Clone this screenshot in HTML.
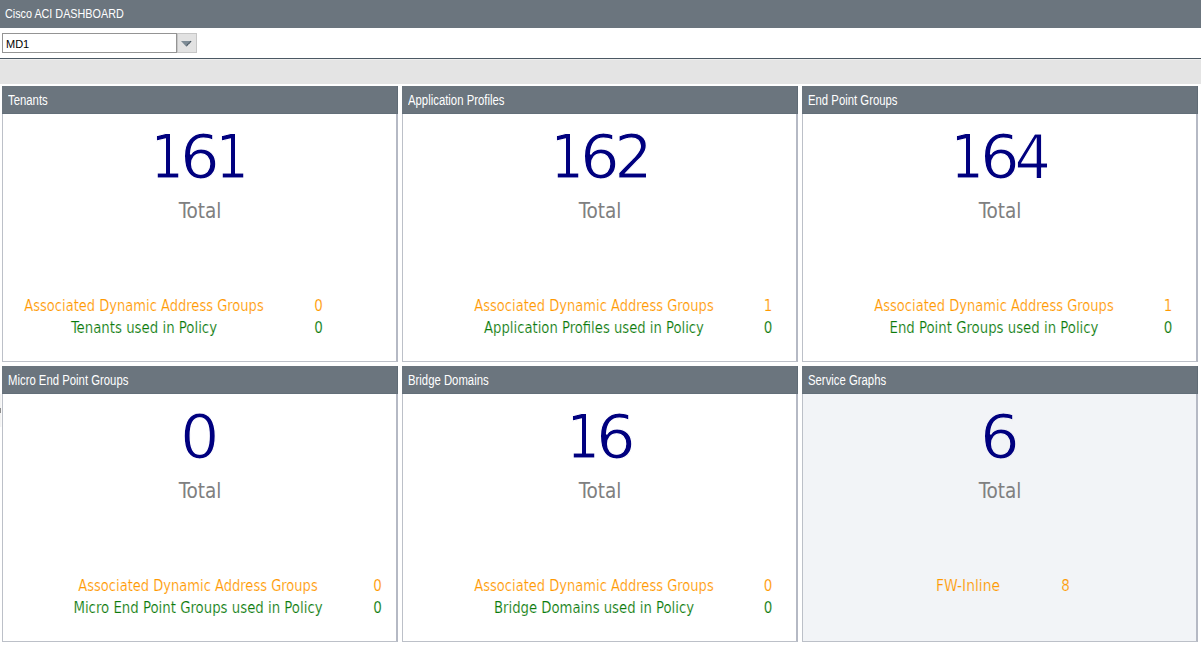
<!DOCTYPE html>
<html>
<head>
<meta charset="utf-8">
<title>Cisco ACI DASHBOARD</title>
<style>
html,body{margin:0;padding:0;background:#fff;}
body{width:1201px;height:645px;position:relative;overflow:hidden;font-family:"DejaVu Sans Condensed","DejaVu Sans","Liberation Sans",sans-serif;}
.narrow{font-family:"Liberation Sans",sans-serif;display:inline-block;transform:scaleX(.82);transform-origin:0 50%;white-space:nowrap;}
#top{position:absolute;left:0;top:0;width:1201px;height:28px;background:#6b757e;color:#fff;font-size:13px;line-height:28px;}
#top span{position:absolute;left:5px;top:0;transform:scaleX(.83);}
#sel{position:absolute;left:2px;top:33px;width:173px;height:18px;border:1px solid #949494;background:#fff;font-family:"Liberation Sans",sans-serif;font-size:11px;line-height:18px;color:#000;}
#sel span{position:absolute;left:3px;top:1px;}
#btn{position:absolute;left:177px;top:33px;width:18px;height:18px;border:1px solid #c6c6c6;background:#e2e2e2;}
#btn svg{position:absolute;left:0;top:0;}
#line{position:absolute;left:0;top:58px;width:1201px;height:1px;background:#4b5863;}
#band{position:absolute;left:0;top:59px;width:1201px;height:25px;background:#e4e4e4;border-top:1px solid #efefef;box-sizing:border-box;}
.p{position:absolute;width:396px;height:276px;background:#fff;}
.p .h{position:absolute;left:0;top:0;width:396px;height:28px;box-sizing:border-box;border-right:1px solid #5f6b75;border-bottom:1px solid #636f79;background:#6b757e;color:#fff;font-size:14px;line-height:28px;}
.p .h span{position:absolute;left:6px;top:0;transform:scaleX(.81);}
.p .b{position:absolute;left:0;top:28px;width:393px;height:247px;border:1px solid #bcc0c8;border-right:2px solid #b5b9c4;border-top:none;background:#fff;}
.p.g .b{background:#f2f4f7;}
.num{position:absolute;left:0;top:36px;width:396px;text-align:center;font-size:61px;line-height:70px;color:#00007f;}
.num span{display:inline-block;margin:0 -1.05px;transform:translateX(var(--x,0px)) scaleX(var(--s,.948));-webkit-text-stroke:1.1px #fff;}
.d1{--s:.94;--x:-.3px}.d6{--s:1.14;--x:-.6px}.d0{--s:1.13;--x:-.7px}.d2{--s:1.1;--x:1px}.d4{--s:1.04;--x:.2px}
.p.g .num span{-webkit-text-stroke-color:#f3f4f7;}
.tot{position:absolute;left:0;top:111px;width:396px;text-align:center;font-size:20.5px;line-height:28px;color:#808080;}
.r{position:absolute;font-size:15px;line-height:22px;white-space:nowrap;transform:translate(-50%,1px) scaleX(var(--s,1));}
.r{-webkit-text-stroke:.15px #fff;}
.p.g .r{-webkit-text-stroke-color:#f2f4f7;}
.o{color:#ff9900;top:208px;}
.gr{color:#0a7a0a;top:230px;}
#tick{position:absolute;left:0;top:394px;width:1px;height:33px;background:#f3f3f3;box-shadow:1px 0 0 #fafafa;}
#tick i{position:absolute;left:0;top:14px;width:1px;height:5px;background:#8e8e8e;}
</style>
</head>
<body>
<div id="top"><span class="narrow">Cisco ACI DASHBOARD</span></div>
<div id="sel"><span>MD1</span></div>
<div id="btn"><svg width="18" height="18" viewBox="0 0 18 18"><polygon points="3,7 13.4,7 8.2,12.6" fill="#7d8b95"/><line x1="13.1" y1="7.2" x2="8.4" y2="12.1" stroke="#3d4b57" stroke-width="1.1" stroke-dasharray="1.6 .5"/></svg></div>
<div id="line"></div>
<div id="band"></div>
<div id="tick"><i></i></div>

<div class="p" style="left:2px;top:86px">
  <div class="h"><span class="narrow">Tenants</span></div>
  <div class="b"></div>
  <div class="num"><span class="d1">1</span><span class="d6">6</span><span class="d1">1</span></div>
  <div class="tot">Total</div>
  <div class="r o" style="left:141.5px;--s:.968">Associated Dynamic Address Groups</div><div class="r o" style="left:316.5px">0</div>
  <div class="r gr" style="left:141.5px;--s:.987">Tenants used in Policy</div><div class="r gr" style="left:316.5px">0</div>
</div>

<div class="p" style="left:402px;top:86px">
  <div class="h"><span class="narrow">Application Profiles</span></div>
  <div class="b"></div>
  <div class="num"><span class="d1">1</span><span class="d6">6</span><span class="d2">2</span></div>
  <div class="tot">Total</div>
  <div class="r o" style="left:191.5px;--s:.968">Associated Dynamic Address Groups</div><div class="r o" style="left:366px">1</div>
  <div class="r gr" style="left:191.5px;--s:.977">Application Profiles used in Policy</div><div class="r gr" style="left:366px">0</div>
</div>

<div class="p" style="left:802px;top:86px">
  <div class="h"><span class="narrow">End Point Groups</span></div>
  <div class="b"></div>
  <div class="num"><span class="d1">1</span><span class="d6">6</span><span class="d4">4</span></div>
  <div class="tot">Total</div>
  <div class="r o" style="left:191.5px;--s:.968">Associated Dynamic Address Groups</div><div class="r o" style="left:366px">1</div>
  <div class="r gr" style="left:191.5px;--s:.985">End Point Groups used in Policy</div><div class="r gr" style="left:366px">0</div>
</div>

<div class="p" style="left:2px;top:366px">
  <div class="h"><span class="narrow">Micro End Point Groups</span></div>
  <div class="b"></div>
  <div class="num"><span class="d0">0</span></div>
  <div class="tot">Total</div>
  <div class="r o" style="left:196px;--s:.968">Associated Dynamic Address Groups</div><div class="r o" style="left:375.5px">0</div>
  <div class="r gr" style="left:196px;--s:.986">Micro End Point Groups used in Policy</div><div class="r gr" style="left:375.5px">0</div>
</div>

<div class="p" style="left:402px;top:366px">
  <div class="h"><span class="narrow">Bridge Domains</span></div>
  <div class="b"></div>
  <div class="num"><span class="d1">1</span><span class="d6">6</span></div>
  <div class="tot">Total</div>
  <div class="r o" style="left:191.5px;--s:.968">Associated Dynamic Address Groups</div><div class="r o" style="left:366px">0</div>
  <div class="r gr" style="left:191.5px;--s:.98">Bridge Domains used in Policy</div><div class="r gr" style="left:366px">0</div>
</div>

<div class="p g" style="left:802px;top:366px">
  <div class="h"><span class="narrow">Service Graphs</span></div>
  <div class="b"></div>
  <div class="num"><span class="d6">6</span></div>
  <div class="tot">Total</div>
  <div class="r o" style="left:165.5px;--s:1.03">FW-Inline</div><div class="r o" style="left:263.5px">8</div>
</div>
</body>
</html>
